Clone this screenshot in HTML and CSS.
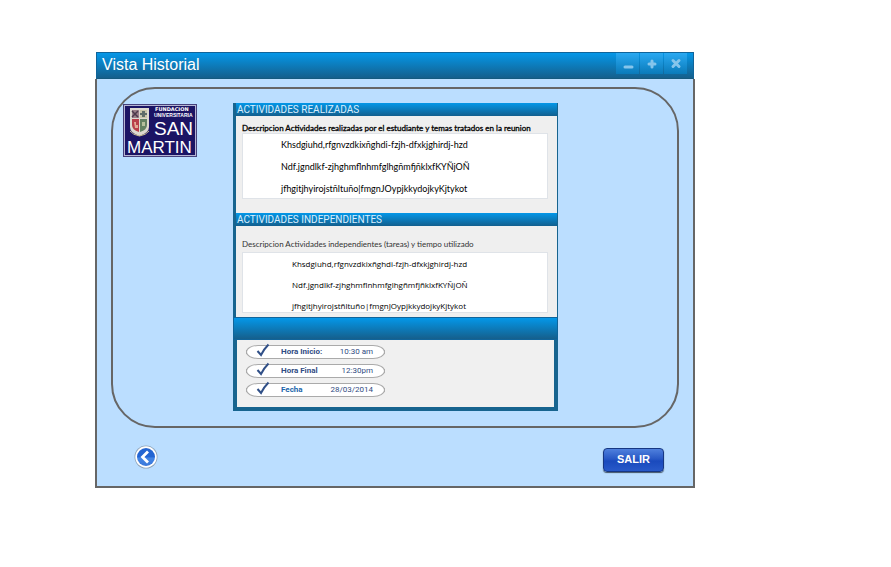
FILE: index.html
```html
<!DOCTYPE html>
<html lang="es">
<head>
<meta charset="utf-8">
<title>Vista Historial</title>
<link rel="stylesheet" href="styles.css">
</head>
<body>
<main class="window">
  <header class="titlebar">
    <h1>Vista Historial</h1>
    <div class="controls">
      <button type="button" aria-label="Minimizar"><svg viewBox="0 0 12 12"><path d="M3 9h7"/></svg></button>
      <button type="button" aria-label="Maximizar"><svg viewBox="0 0 12 12"><path d="M6 3v6M3 6h6"/></svg></button>
      <button type="button" aria-label="Cerrar"><svg viewBox="0 0 12 12"><path d="M3 2.500l6 6M9 2.500l-6 6"/></svg></button>
    </div>
  </header>
  <div class="content">
    <section class="frame">
      <svg class="logo" viewBox="0 0 74 53" role="img" aria-label="Fundación Universitaria San Martín">
        <rect width="74" height="53" fill="#45417c"/>
        <rect x="1" y="1" width="72" height="51" fill="#b5b5d2"/>
        <rect x="2" y="2" width="70" height="49" fill="#1b1464"/>
        <path d="M7 4h19v19q0 6-9.500 9q-9.500-3-9.500-9z" fill="#ddd9cf"/>
        <path d="M9 6h7v8H9z" fill="#9a7f88"/>
        <path d="M9 7l6 6M15 7l-6 6" stroke="#4d3a4b" stroke-width="1.500"/>
        <path d="M17 6h7v8h-7z" fill="#c9c5a8"/>
        <path d="M19 7h3v2h2v2h-2v2h-3v-2h-2v-2h2z" fill="#606d69"/>
        <path d="M9 15h7v13q-7-2-7-7z" fill="#b93e49"/>
        <path d="M11 18h2v3h2v3h-3z" fill="#e3a995"/>
        <path d="M17 15h7v6q0 5-7 7z" fill="#648263"/>
        <path d="M19 18h3v4h-3z" fill="#b5c09c"/>
        <path d="M7 27q3 4 9.500 5q6.500-1 9.500-5" fill="none" stroke="#c9bd8e"/>
        <text class="logo-top" x="32" y="7">FUNDACION</text>
        <text class="logo-mid" x="31" y="13">UNIVERSITARIA</text>
        <text class="logo-san" x="31" y="31">SAN</text>
        <text class="logo-martin" x="4" y="49">MARTIN</text>
      </svg>

      <div class="panel">
        <section class="block">
          <h2>ACTIVIDADES REALIZADAS</h2>
          <div class="field strong">
            <label for="realizadas">Descripcion Actividades realizadas por el estudiante y temas tratados en la reunion</label>
            <textarea id="realizadas" wrap="off" spellcheck="false">Khsdgiuhd,rfgnvzdkixñghdi-fzjh-dfxkjghirdj-hzd
Ndf.jgndlkf-zjhghmflnhmfglhgñmfjñklxfKYÑjOÑ
jfhgitjhyirojstñltuño|fmgnJOypjkkydojkyKjtykot</textarea>
          </div>
        </section>
        <section class="block">
          <h2>ACTIVIDADES INDEPENDIENTES</h2>
          <div class="field plain">
            <label for="independientes">Descripcion Actividades independientes (tareas) y tiempo utilizado</label>
            <textarea id="independientes" wrap="off" spellcheck="false">Khsdgiuhd,rfgnvzdkixñghdi-fzjh-dfxkjghirdj-hzd
Ndf.jgndlkf-zjhghmflnhmfglhgñmfjñklxfKYÑjOÑ
jfhgitjhyirojstñltuño|fmgnJOypjkkydojkyKjtykot</textarea>
          </div>
        </section>
        <section class="schedule">
          <dl>
            <div class="pill"><svg viewBox="0 0 14 14"><path d="M1.500 8l3.500 4Q8 6 12.500 1.500"/></svg><dt>Hora Inicio:</dt><dd>10:30 am</dd></div>
            <div class="pill"><svg viewBox="0 0 14 14"><path d="M1.500 8l3.500 4Q8 6 12.500 1.500"/></svg><dt>Hora Final</dt><dd>12:30pm</dd></div>
            <div class="pill link"><svg viewBox="0 0 14 14"><path d="M1.500 8l3.500 4Q8 6 12.500 1.500"/></svg><dt>Fecha</dt><dd>28/03/2014</dd></div>
          </dl>
        </section>
      </div>
    </section>
    <footer class="actions">
      <button type="button" class="back" aria-label="Volver"><svg viewBox="0 0 24 24">
        <defs><linearGradient id="blue" x1="0" y1="0" x2="0" y2="1"><stop offset="0" stop-color="#2464cf"/><stop offset=".5" stop-color="#2365d4"/><stop offset=".55" stop-color="#4486e5"/><stop offset="1" stop-color="#3977d9"/></linearGradient></defs>
        <circle cx="12" cy="12" r="11.500" fill="#8fa3b8"/><circle cx="12" cy="12" r="10.700" fill="#fff"/><circle cx="12" cy="12" r="9" fill="url(#blue)"/>
        <path d="M14 6.500L8.500 12l5.500 5.500" fill="none" stroke="#fff" stroke-width="2.800"/>
      </svg></button>
      <button type="button" class="exit">SALIR</button>
    </footer>
  </div>
</main>
</body>
</html>
```
FILE: styles.css
```css
*, *::before, *::after { box-sizing: border-box; }
body {
  margin: 0;
  padding: 52px 196px 0 95px;
  background: #fff;
  font-family: "Liberation Sans", Arial, sans-serif;
  color: #111;
}
h1, h2, dl, dd { margin: 0; font-weight: 400; }
button { margin: 0; padding: 0; border: 0; font: inherit; }

.titlebar {
  display: flex;
  justify-content: space-between;
  height: 27px;
  margin: 0 1px;
  padding-left: 5px;
  border: 1px solid #10649a;
  border-bottom-color: #165a7e;
  background: linear-gradient(#0597e8, #155f8c);
}
.titlebar h1 { color: #fff; font-size: 16px; line-height: 23px; }
.controls { display: flex; gap: 1px; height: 21px; margin-right: 6px; }
.controls button {
  width: 23px;
  background: linear-gradient(#2aa9f2, #0a7ab9);
  display: grid;
  place-items: center;
}
.controls svg {
  width: 12px;
  height: 12px;
  fill: none;
  stroke: #86c5eb;
  stroke-width: 3px;
  stroke-linecap: round;
}

.content {
  padding: 8px 14px 14px;
  border: 2px solid #666;
  border-top: 0;
  background: #bbdeff;
}
.frame {
  display: grid;
  grid-template-columns: 74px minmax(0, 1fr);
  column-gap: 36px;
  align-items: start;
  padding: 14px 119px 15px 10px;
  border: 2px solid #666;
  border-radius: 44px;
}
.logo { width: 74px; height: 53px; margin-top: 1px; }
.logo text { fill: #fff; font-family: "Liberation Sans", Arial, sans-serif; }
.logo .logo-top { font-family: "DejaVu Sans", sans-serif; font-size: 5px; font-weight: 700; }
.logo .logo-mid { font-size: 5px; font-weight: 700; }
.logo .logo-san { font-size: 19px; }
.logo .logo-martin { font-size: 17px; }

.block { border-left: 3px solid #17648f; border-right: 1px solid #17648f; background: #efefef; }
.block h2 {
  height: 13px;
  background: linear-gradient(#0497e8, #125f8e);
  color: #d9efff;
  font-family: Roboto, sans-serif;
  font-size: 10px;
  line-height: 13px;
  padding-left: 1px;
}
.field { display: flex; flex-direction: column; }
.field label {
  padding-left: 6px;
  color: #333;
  font-family: Lato, sans-serif;
  font-size: 8px;
  line-height: 10px;
  white-space: nowrap;
}
.strong label { color: #000; -webkit-text-stroke: 0.3px #000; }
.field textarea {
  display: block;
  margin: 0 9px 0 6px;
  border: 1px solid #dfe3e8;
  border-radius: 0;
  background: #fff;
  color: #000;
  resize: none;
  overflow: hidden;
  white-space: pre;
}
.strong { height: 97px; }
.strong label { margin: 7px 0 0; }
.strong textarea { height: 66px; padding: 0 0 0 38px; font: 9px/22px Lato, sans-serif; }
.plain { height: 91px; }
.plain label { margin: 13px 0 3px; }
.plain textarea { height: 61px; padding: 0 0 0 49px; font: 8px/21px "Open Sans", sans-serif; }

.schedule { border: 4px solid #17648f; border-top: 0; background: #f0f0f0; }
.schedule::before {
  content: "";
  display: block;
  height: 23px;
  margin: 0 -4px;
  border: 1px solid #10649a;
  background: linear-gradient(#0497e8, #155f8c);
}
.schedule dl { display: grid; gap: 5px; padding: 5px 9px 10px; }
.pill {
  position: relative;
  display: flex;
  align-items: center;
  width: 139px;
  height: 14px;
  padding: 0 11px 0 9px;
  border: 1px solid #aaa;
  border-radius: 12px / 7px;
  background: #fff;
  color: #304b83;
  font-family: Roboto, sans-serif;
  font-size: 8px;
  line-height: 12px;
}
.pill::before, .pill::after {
  content: "";
  position: absolute;
  top: 4px;
  width: 1px;
  height: 4px;
  background: #aaa;
}
.pill::before { left: -1px; }
.pill::after { right: -1px; }
.pill svg { width: 14px; height: 14px; margin: -4px 11px 0 0; fill: none; stroke: #304f87; stroke-width: 2px; }
.pill dt { font-weight: 700; }
.pill dd { margin-left: auto; }
.link dt { color: #1b66ab; }

.actions { display: flex; justify-content: space-between; align-items: flex-start; padding: 17px 15px 0 23px; }
.back { width: 24px; height: 24px; background: none; }
.back svg { display: block; width: 24px; height: 24px; }
.exit {
  width: 61px;
  height: 24px;
  margin-top: 3px;
  padding-bottom: 2px;
  border: 1px solid #173783;
  border-radius: 4px;
  background: linear-gradient(#4f80dd, #2858c5 45%, #1a4abd 55%, #2859c9);
  box-shadow: 0 1px 1px #456;
  color: #fff;
  font-size: 11px;
  line-height: 20px;
  font-weight: 700;
}
```
